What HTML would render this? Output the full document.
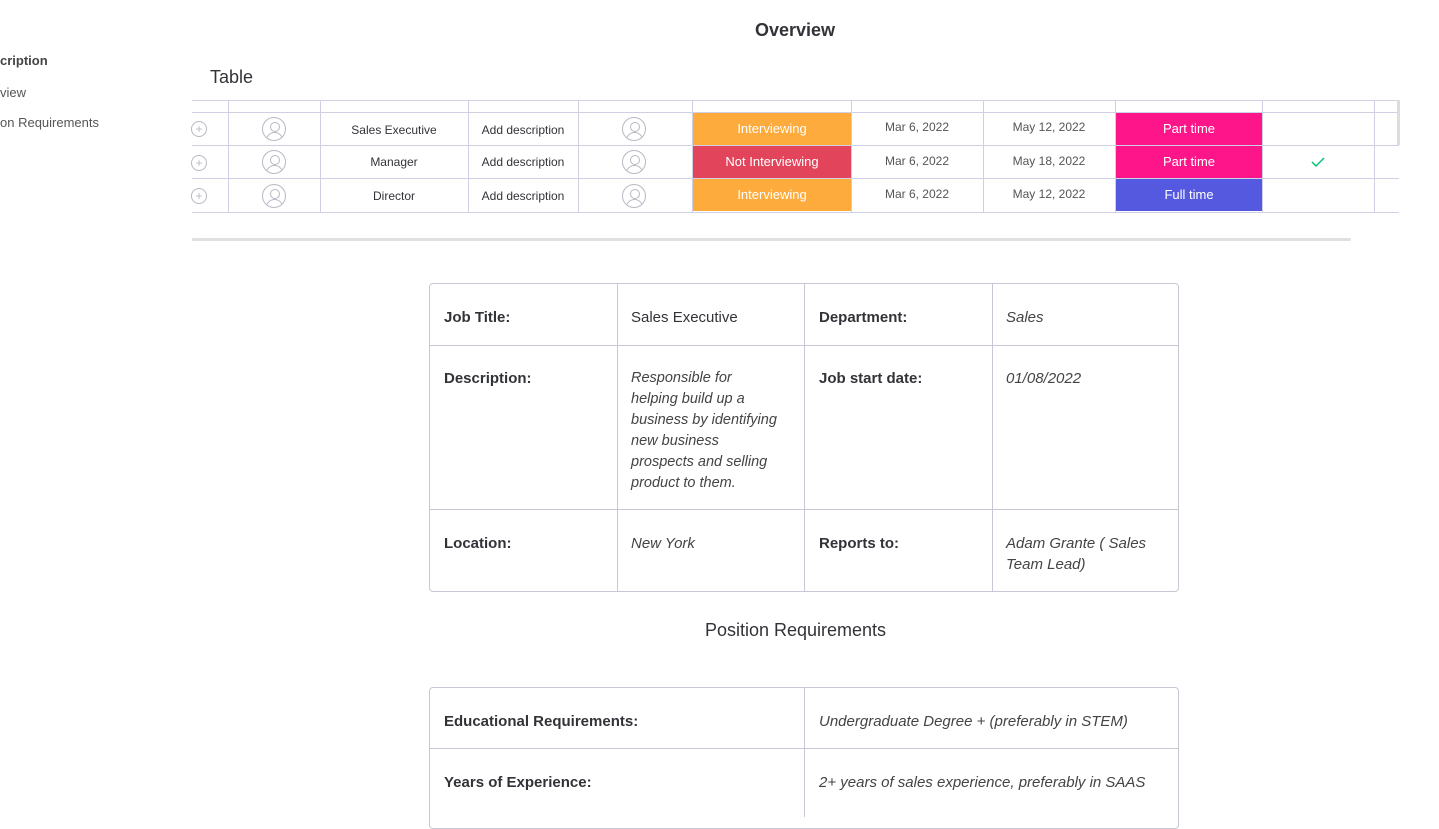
<!DOCTYPE html>
<html><head><meta charset="utf-8"><style>
body{margin:0;width:1439px;height:810px;overflow:hidden;background:#fff;font-family:"Liberation Sans",sans-serif;color:#333;position:relative}
.a{position:absolute}
.v{position:absolute;width:1px;background:#d0d0e4}
.hl{position:absolute;height:1px;background:#d0d0e4}
.c{position:absolute;text-align:center;font-size:12px;color:#323338;white-space:nowrap}
.st{position:absolute;color:#fff;font-size:13px;text-align:center;line-height:32px}
.av{position:absolute;width:24px;height:24px;border:1.2px solid #b8b8c4;border-radius:50%;overflow:hidden;box-sizing:border-box}
.av:before{content:"";position:absolute;left:6.5px;top:3.5px;width:8px;height:8px;border:1.2px solid #b8b8c4;border-radius:50%}
.av:after{content:"";position:absolute;left:3px;top:14px;width:15px;height:14px;border:1.2px solid #b8b8c4;border-radius:50%}
.pl{position:absolute;left:191px;width:14px;height:14px;border:1px solid #b8b8c4;border-radius:50%;color:#b8b8c4;font-size:12px;line-height:14px;text-align:center}
.t{position:absolute;border:1px solid #c6c8d6;border-radius:4px;overflow:hidden}
.td{position:absolute;font-size:15px;color:#323338;line-height:21px;white-space:nowrap}
.b{font-weight:bold}
.i{font-style:italic;color:#444}
</style></head><body>
<div class="a" style="left:0;top:53px;font-size:13px;font-weight:bold;color:#444">cription</div>
<div class="a" style="left:0;top:85px;font-size:13px;color:#555">view</div>
<div class="a" style="left:0;top:115px;font-size:13px;color:#555">on Requirements</div>
<div class="a" style="left:0;width:1590px;top:20px;text-align:center;font-size:18px;font-weight:bold;color:#323338">Overview</div>
<div class="a" style="left:210px;top:67px;font-size:18px;color:#323338">Table</div>

<div class="hl" style="left:192px;width:1207px;top:100px"></div>
<div class="hl" style="left:192px;width:1207px;top:112px"></div>
<div class="hl" style="left:192px;width:1207px;top:145px"></div>
<div class="hl" style="left:192px;width:1207px;top:178px"></div>
<div class="hl" style="left:192px;width:1207px;top:212px"></div>
<div class="v" style="left:228px;top:100px;height:112px"></div>
<div class="v" style="left:320px;top:100px;height:112px"></div>
<div class="v" style="left:468px;top:100px;height:112px"></div>
<div class="v" style="left:578px;top:100px;height:112px"></div>
<div class="v" style="left:692px;top:100px;height:112px"></div>
<div class="v" style="left:851px;top:100px;height:112px"></div>
<div class="v" style="left:983px;top:100px;height:112px"></div>
<div class="v" style="left:1115px;top:100px;height:112px"></div>
<div class="v" style="left:1262px;top:100px;height:112px"></div>
<div class="v" style="left:1374px;top:100px;height:112px"></div>
<div class="a" style="left:1397px;top:100px;width:3px;height:45px;background:#ddd"></div>

<div class="pl" style="top:121px">+</div><div class="pl" style="top:155px">+</div><div class="pl" style="top:188px">+</div>
<div class="av" style="left:262px;top:117px"></div><div class="av" style="left:262px;top:150px"></div><div class="av" style="left:262px;top:184px"></div>
<div class="av" style="left:622px;top:117px"></div><div class="av" style="left:622px;top:150px"></div><div class="av" style="left:622px;top:184px"></div>

<div class="c" style="left:320px;width:148px;top:123px">Sales Executive</div>
<div class="c" style="left:320px;width:148px;top:155px">Manager</div>
<div class="c" style="left:320px;width:148px;top:189px">Director</div>
<div class="c" style="left:468px;width:110px;top:123px">Add description</div>
<div class="c" style="left:468px;width:110px;top:155px">Add description</div>
<div class="c" style="left:468px;width:110px;top:189px">Add description</div>

<div class="st" style="left:693px;width:158px;top:113px;background:#fdab3d">Interviewing</div>
<div class="st" style="left:693px;width:158px;top:146px;background:#e2445c">Not Interviewing</div>
<div class="st" style="left:693px;width:158px;top:179px;background:#fdab3d">Interviewing</div>

<div class="c" style="left:851px;width:132px;top:120px;color:#555">Mar 6, 2022</div>
<div class="c" style="left:851px;width:132px;top:154px;color:#555">Mar 6, 2022</div>
<div class="c" style="left:851px;width:132px;top:187px;color:#555">Mar 6, 2022</div>
<div class="c" style="left:983px;width:132px;top:120px;color:#555">May 12, 2022</div>
<div class="c" style="left:983px;width:132px;top:154px;color:#555">May 18, 2022</div>
<div class="c" style="left:983px;width:132px;top:187px;color:#555">May 12, 2022</div>

<div class="st" style="left:1116px;width:146px;top:113px;background:#ff158a">Part time</div>
<div class="st" style="left:1116px;width:146px;top:146px;background:#ff158a">Part time</div>
<div class="st" style="left:1116px;width:146px;top:179px;background:#5559df">Full time</div>
<svg class="a" style="left:1311px;top:156px" width="14" height="12" viewBox="0 0 14 12"><path d="M1 6 L5 10 L13 2" fill="none" stroke="#00c875" stroke-width="1.5"/></svg>

<div class="a" style="left:192px;top:238px;width:1159px;height:3px;background:#e0e0e0;border-radius:2px"></div>

<div class="t" style="left:429px;top:283px;width:748px;height:307px"></div>
<div class="hl" style="left:429px;width:749px;top:345px;background:#c6c8d6"></div>
<div class="hl" style="left:429px;width:749px;top:509px;background:#c6c8d6"></div>
<div class="v" style="left:617px;top:283px;height:308px;background:#c6c8d6"></div>
<div class="v" style="left:804px;top:283px;height:308px;background:#c6c8d6"></div>
<div class="v" style="left:992px;top:283px;height:308px;background:#c6c8d6"></div>

<div class="td b" style="left:444px;top:307px">Job Title:</div>
<div class="td" style="left:631px;top:307px">Sales Executive</div>
<div class="td b" style="left:819px;top:307px">Department:</div>
<div class="td i" style="left:1006px;top:307px">Sales</div>
<div class="td b" style="left:444px;top:368px">Description:</div>
<div class="td i" style="left:631px;top:368px;font-size:14.5px">Responsible for<br>helping build up a<br>business by identifying<br>new business<br>prospects and selling<br>product to them.</div>
<div class="td b" style="left:819px;top:368px">Job start date:</div>
<div class="td i" style="left:1006px;top:368px">01/08/2022</div>
<div class="td b" style="left:444px;top:533px">Location:</div>
<div class="td i" style="left:631px;top:533px">New York</div>
<div class="td b" style="left:819px;top:533px">Reports to:</div>
<div class="td i" style="left:1006px;top:533px">Adam Grante ( Sales<br>Team Lead)</div>

<div class="a" style="left:429px;width:733px;top:620px;text-align:center;font-size:18px;color:#323338">Position Requirements</div>

<div class="t" style="left:429px;top:687px;width:748px;height:140px"></div>
<div class="hl" style="left:429px;width:749px;top:748px;background:#c6c8d6"></div>
<div class="v" style="left:804px;top:687px;height:130px;background:#c6c8d6"></div>
<div class="td b" style="left:444px;top:711px">Educational Requirements:</div>
<div class="td i" style="left:819px;top:711px">Undergraduate Degree + (preferably in STEM)</div>
<div class="td b" style="left:444px;top:772px">Years of Experience:</div>
<div class="td i" style="left:819px;top:772px">2+ years of sales experience, preferably in SAAS</div>
</body></html>
